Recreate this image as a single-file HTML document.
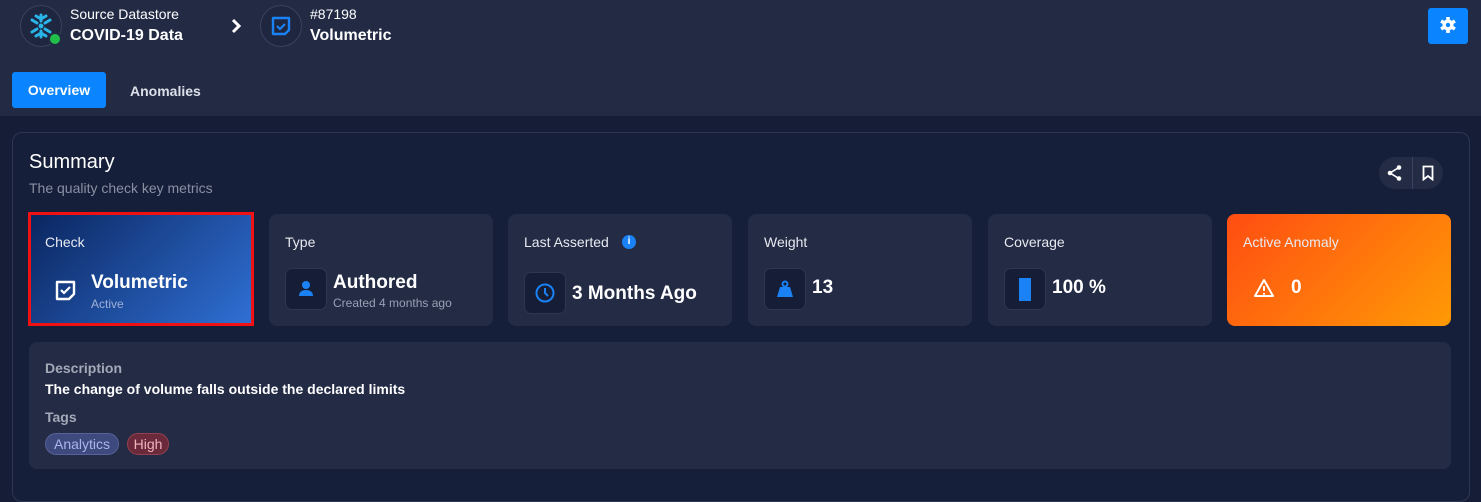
<!DOCTYPE html>
<html><head><meta charset="utf-8"><style>
*{box-sizing:border-box;margin:0;padding:0}
body{width:1481px;height:485px;background:#161e37;font-family:"Liberation Sans",sans-serif;color:#fff;position:relative;overflow:hidden}
.hdr{position:absolute;left:0;top:0;width:1481px;height:116px;background:#222a44}
.abs{position:absolute}
.circ{position:absolute;width:42px;height:42px;border-radius:50%;border:1px solid #3a4260;background:#1e2640}
.panel{position:absolute;left:12px;top:132px;width:1458px;height:370px;border:1px solid #2e3652;border-radius:10px;background:#161f39}
.card{position:absolute;top:214px;width:224px;height:112px;border-radius:8px;background:#232b45}
.lbl{position:absolute;left:16px;top:20px;font-size:14px;color:#e8eaf0}
.ib{position:absolute;width:42px;height:42px;border-radius:7px;background:#161e37;border:1px solid #2e3652}
.big{position:absolute;font-size:19px;font-weight:bold}
</style></head><body>
<div class="hdr"></div>
<div class="circ" style="left:20px;top:5px">
<svg width="42" height="42" viewBox="0 0 42 42" style="position:absolute;left:-1px;top:-1px"><g stroke="#29b5e8" stroke-width="3" stroke-linecap="round" fill="none"><path d="M21 10v6M21 26v6M12 15l5 3M25 24l5 3M12 27l5-3M25 18l5-3"/><path d="M16 11l5 3 5-3M16 31l5-3 5 3"/></g><circle cx="21" cy="21" r="2.5" fill="#29b5e8"/></svg>
</div>
<div class="abs" style="left:48px;top:32px;width:14px;height:14px;border-radius:50%;background:#1fbf4a;border:2px solid #222a44"></div>
<div class="abs" style="left:70px;top:6px;font-size:14px">Source Datastore</div>
<div class="abs" style="left:70px;top:27px;font-size:16px;font-weight:bold">COVID-19 Data</div>
<svg class="abs" style="left:229px;top:17px" width="14" height="18" viewBox="0 0 14 18"><path d="M4 3l6 6-6 6" stroke="#fff" stroke-width="3" fill="none"/></svg>
<div class="circ" style="left:260px;top:5px">
<svg width="42" height="42" viewBox="0 0 42 42" style="position:absolute;left:-1px;top:-1px"><path d="M13 13h16v12l-4 4H13z" stroke="#1a82f5" stroke-width="2.4" fill="none" stroke-linejoin="round"/><path d="M17 21l3 3 5-5" stroke="#1a82f5" stroke-width="2.2" fill="none"/></svg>
</div>
<div class="abs" style="left:310px;top:6px;font-size:14px">#87198</div>
<div class="abs" style="left:310px;top:27px;font-size:16px;font-weight:bold">Volumetric</div>
<div class="abs" style="left:1428px;top:8px;width:40px;height:36px;border-radius:3px;background:#0a84ff">
<svg width="40" height="36" viewBox="0 0 40 36"><g transform="translate(20 17)" fill="#fff"><circle r="5.5"/><rect x="-1.8" y="-8" width="3.6" height="16"/><rect x="-1.8" y="-8" width="3.6" height="16" transform="rotate(60)"/><rect x="-1.8" y="-8" width="3.6" height="16" transform="rotate(120)"/><circle r="2.2" fill="#0a84ff"/></g></svg></div>
<div class="abs" style="left:12px;top:72px;width:94px;height:36px;border-radius:3px;background:#0a84ff;font-size:14px;font-weight:bold;text-align:center;line-height:37px">Overview</div>
<div class="abs" style="left:130px;top:83px;font-size:14px;font-weight:bold;color:#dde0e8">Anomalies</div>

<div class="panel"></div>
<div class="abs" style="left:29px;top:151px;font-size:20px">Summary</div>
<div class="abs" style="left:29px;top:180px;font-size:14px;color:#8a90a4">The quality check key metrics</div>
<div class="abs" style="left:1379px;top:157px;width:64px;height:32px;border-radius:16px;background:#232b45"></div>
<div class="abs" style="left:1412px;top:157px;width:1px;height:32px;background:#3a4260"></div>
<svg class="abs" style="left:1386px;top:164px" width="18" height="18" viewBox="0 0 18 18"><g fill="#fff"><circle cx="13" cy="3.5" r="2.3"/><circle cx="4" cy="9" r="2.3"/><circle cx="13" cy="14.5" r="2.3"/></g><path d="M13 3.5L4 9l9 5.5" stroke="#fff" stroke-width="1.6" fill="none"/></svg>
<svg class="abs" style="left:1421px;top:165px" width="14" height="16" viewBox="0 0 14 16"><path d="M2.5 1.5h9v13L7 11l-4.5 3.5z" stroke="#fff" stroke-width="1.8" fill="none"/></svg>

<div class="card" style="left:28px;top:212px;width:226px;height:114px;border:3px solid #f01212;border-radius:0;background:linear-gradient(135deg,#0b2660,#2f6fd3)">
<div class="lbl" style="left:14px;top:19px">Check</div>
<svg class="abs" style="left:24px;top:65px" width="22" height="22" viewBox="0 0 22 22"><path d="M2 2h17v12l-5 5H2z" stroke="#fff" stroke-width="2.4" fill="none" stroke-linejoin="round"/><path d="M6 10l3 3 6-6" stroke="#fff" stroke-width="2.2" fill="none"/></svg>
<div class="big" style="left:60px;top:57px">Volumetric</div>
<div class="abs" style="left:60px;top:82px;font-size:12px;color:#9fb0d8">Active</div>
</div>
<div class="card" style="left:269px"><div class="lbl">Type</div>
<div class="ib" style="left:16px;top:54px"><svg width="40" height="40" viewBox="0 0 40 40"><circle cx="20" cy="16" r="4" fill="#1a82f5"/><path d="M13 27c0-4 3-6 7-6s7 2 7 6z" fill="#1a82f5"/></svg></div>
<div class="big" style="left:64px;top:58px">Authored</div>
<div class="abs" style="left:64px;top:82px;font-size:12px;color:#9aa0b4">Created 4 months ago</div></div>
<div class="card" style="left:508px"><div class="lbl">Last Asserted</div>
<div class="abs" style="left:114px;top:21px;width:14px;height:14px;border-radius:50%;background:#1a82f5;font-size:10px;font-weight:bold;text-align:center;line-height:14px">i</div>
<div class="ib" style="left:16px;top:58px"><svg width="40" height="40" viewBox="0 0 40 40"><circle cx="20" cy="20" r="8.5" stroke="#1a82f5" stroke-width="2" fill="none"/><path d="M20 15v5l3 3" stroke="#1a82f5" stroke-width="2" fill="none"/></svg></div>
<div class="big" style="left:64px;top:69px">3 Months Ago</div></div>
<div class="card" style="left:748px"><div class="lbl">Weight</div>
<div class="ib" style="left:16px;top:54px"><svg width="40" height="40" viewBox="0 0 40 40"><circle cx="20" cy="15" r="2.5" stroke="#1a82f5" stroke-width="2" fill="none"/><path d="M15 18h10l3 10H12z" fill="#1a82f5"/></svg></div>
<div class="big" style="left:64px;top:63px">13</div></div>
<div class="card" style="left:988px"><div class="lbl">Coverage</div>
<div class="ib" style="left:16px;top:54px"><div class="abs" style="left:14px;top:9px;width:12px;height:23px;background:#1a82f5"></div></div>
<div class="big" style="left:64px;top:63px">100 %</div></div>
<div class="card" style="left:1227px;background:linear-gradient(135deg,#ff4d12,#ff9a05)"><div class="lbl">Active Anomaly</div>
<svg class="abs" style="left:26px;top:64px" width="22" height="20" viewBox="0 0 22 20"><path d="M11 2L20 18H2z" stroke="#fff" stroke-width="2" fill="none" stroke-linejoin="round"/><path d="M11 8v5M11 15v1.5" stroke="#fff" stroke-width="2"/></svg>
<div class="big" style="left:64px;top:63px">0</div></div>

<div class="abs" style="left:29px;top:342px;width:1422px;height:127px;border-radius:8px;background:#232b45"></div>
<div class="abs" style="left:45px;top:360px;font-size:14px;font-weight:bold;color:#a4a9b8">Description</div>
<div class="abs" style="left:45px;top:381px;font-size:14px;font-weight:bold">The change of volume falls outside the declared limits</div>
<div class="abs" style="left:45px;top:409px;font-size:14px;font-weight:bold;color:#a4a9b8">Tags</div>
<div class="abs" style="left:45px;top:433px;width:74px;height:22px;border-radius:11px;background:#3e4a7e;border:1px solid #56629a;color:#a9b6ee;font-size:14px;text-align:center;line-height:20px">Analytics</div>
<div class="abs" style="left:127px;top:433px;width:42px;height:22px;border-radius:11px;background:#6b2a3c;border:1px solid #94404f;color:#f0b4bc;font-size:14px;text-align:center;line-height:20px">High</div>
</body></html>
